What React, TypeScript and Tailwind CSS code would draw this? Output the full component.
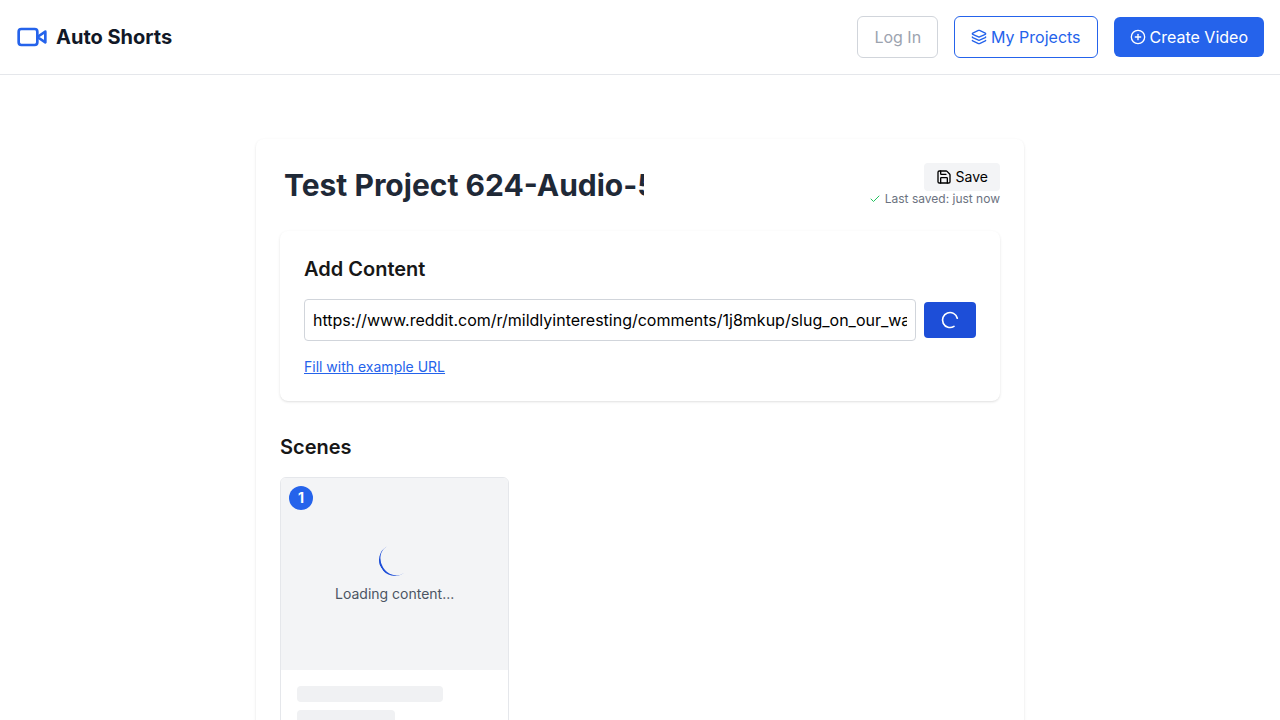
import { useState } from "react";
import { Check, CirclePlus, Layers, LoaderCircle, Save } from "lucide-react";

function VideoLogo() {
  return (
    <svg
      className="size-8 text-[#2563eb]"
      viewBox="0 0 24 24"
      fill="none"
      stroke="currentColor"
      strokeWidth="2"
      strokeLinecap="round"
      strokeLinejoin="round"
      aria-hidden="true"
    >
      <path d="m22 8-6 4 6 4V8Z" />
      <rect width="14" height="12" x="2" y="6" rx="2" />
    </svg>
  );
}

function Header() {
  return (
    <header className="flex items-center justify-between border-b border-[#e5e7eb] p-4">
      <a href="#" className="flex items-center gap-2">
        <VideoLogo />
        <span className="text-xl font-bold text-[#111827]">Auto Shorts</span>
      </a>
      <nav className="flex items-center gap-4">
        <button
          type="button"
          disabled
          className="rounded-md border border-[#d1d5db] px-4 py-2 text-[#9ca3af]"
        >
          Log In
        </button>
        <a
          href="#projects"
          className="flex items-center gap-1 rounded-md border border-[#2563eb] px-4 py-2 text-[#2563eb]"
        >
          <Layers className="size-4" />
          My Projects
        </a>
        <a
          href="#create"
          className="flex items-center gap-1 rounded-md bg-[#2563eb] px-4 py-2 text-white"
        >
          <CirclePlus className="size-4" />
          Create Video
        </a>
      </nav>
    </header>
  );
}

function AddContent() {
  const [url, setUrl] = useState(
    "https://www.reddit.com/r/mildlyinteresting/comments/1j8mkup/slug_on_our_wall/",
  );
  return (
    <section className="rounded-lg bg-white p-6 shadow-sm">
      <h2 className="mb-4 text-xl font-semibold">Add Content</h2>
      <div className="flex items-center gap-2">
        <input
          type="text"
          aria-label="Content URL"
          value={url}
          onChange={(e) => setUrl(e.target.value)}
          className="min-w-0 flex-1 rounded border border-[#d1d5db] p-2 text-black"
        />
        <button
          type="button"
          aria-label="Adding content"
          className="rounded bg-[#1d4ed8] px-4 py-2 text-white"
        >
          <LoaderCircle className="size-5 rotate-[58deg]" />
        </button>
      </div>
      <button type="button" className="mt-4 block text-sm text-[#2563eb] underline">
        Fill with example URL
      </button>
    </section>
  );
}

function SceneCard({ number }: { number: number }) {
  return (
    <article className="overflow-hidden rounded-md border border-[#e5e7eb] bg-white">
      <div className="relative flex h-48 flex-col items-center justify-center gap-2 bg-[#f3f4f6]">
        <span className="absolute top-2 left-2 flex size-6 items-center justify-center rounded-full bg-[#2563eb] text-sm font-bold text-white">
          {number}
        </span>
        <div className="size-8 rotate-[58deg] rounded-full border-b-2 border-[#1d4ed8]" />
        <p className="text-sm text-[#4b5563]">Loading content...</p>
      </div>
      <div className="flex flex-col gap-2 p-4">
        <div className="h-4 w-3/4 rounded bg-[#f0f1f3]" />
        <div className="h-4 w-1/2 rounded bg-[#f0f1f3]" />
      </div>
    </article>
  );
}

export default function App() {
  const [title, setTitle] = useState("Test Project 624-Audio-5");
  return (
    <div className="h-screen overflow-hidden bg-white font-['Inter',sans-serif] text-[#171717]">
      <Header />
      <main className="mx-auto max-w-3xl py-16">
        <div className="rounded-lg bg-white p-6 shadow-sm">
          <div className="mb-6 flex items-center justify-between">
            <input
              type="text"
              aria-label="Project title"
              value={title}
              onChange={(e) => setTitle(e.target.value)}
              className="w-92 px-1 text-3xl font-bold text-[#1f2937]"
            />
            <div className="flex flex-col items-end">
              <button
                type="button"
                className="flex items-center gap-1 rounded bg-[#f3f4f6] px-3 py-1 text-sm text-black"
              >
                <Save className="size-4" />
                Save
              </button>
              <p className="flex items-center gap-1 text-xs text-[#6b7280]">
                <Check className="size-3 text-[#22c55e]" />
                Last saved: just now
              </p>
            </div>
          </div>
          <AddContent />
          <h2 className="mt-8 mb-4 text-xl font-semibold">Scenes</h2>
          <div className="grid grid-cols-3 gap-4">
            <SceneCard number={1} />
          </div>
        </div>
      </main>
    </div>
  );
}
